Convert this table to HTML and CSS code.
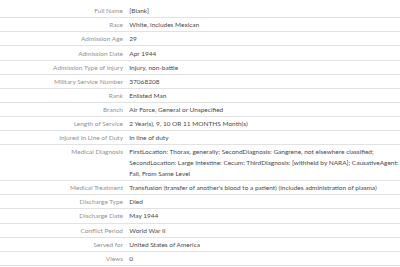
FILE: index.html
```html
<!DOCTYPE html>
<html>
<head>
<meta charset="utf-8">
<link rel="stylesheet" href="styles.css">
</head>
<body>
<div class="details">
  <div class="row"><div class="label">Full Name</div><div class="value">[Blank]</div></div>
  <div class="row"><div class="label">Race</div><div class="value">White, includes Mexican</div></div>
  <div class="row"><div class="label">Admission Age</div><div class="value">29</div></div>
  <div class="row"><div class="label">Admission Date</div><div class="value">Apr 1944</div></div>
  <div class="row"><div class="label">Admission Type of Injury</div><div class="value">Injury, non-battle</div></div>
  <div class="row"><div class="label">Military Service Number</div><div class="value">37068208</div></div>
  <div class="row"><div class="label">Rank</div><div class="value">Enlisted Man</div></div>
  <div class="row"><div class="label">Branch</div><div class="value">Air Force, General or Unspecified</div></div>
  <div class="row"><div class="label">Length of Service</div><div class="value">2 Year(s), 9, 10 OR 11 MONTHS Month(s)</div></div>
  <div class="row"><div class="label">Injured In Line of Duty</div><div class="value">In line of duty</div></div>
  <div class="row"><div class="label">Medical Diagnosis</div><div class="value">FirstLocation: Thorax, generally; SecondDiagnosis: Gangrene, not elsewhere classified; SecondLocation: Large Intestine: Cecum; ThirdDiagnosis: [withheld by NARA]; CausativeAgent: Fall, From Same Level</div></div>
  <div class="row"><div class="label">Medical Treatment</div><div class="value">Transfusion (transfer of another's blood to a patient) (includes administration of plasma)</div></div>
  <div class="row"><div class="label">Discharge Type</div><div class="value">Died</div></div>
  <div class="row"><div class="label">Discharge Date</div><div class="value">May 1944</div></div>
  <div class="row"><div class="label">Conflict Period</div><div class="value">World War II</div></div>
  <div class="row"><div class="label">Served for</div><div class="value">United States of America</div></div>
  <div class="row"><div class="label">Views</div><div class="value">0</div></div>
</div>
</body>
</html>
```
FILE: styles.css
```css
html, body {
  margin: 0;
  padding: 0;
  background: #ffffff;
}
body {
  font-family: Lato, "Open Sans", sans-serif;
  font-size: 6.5px;
  color: #555555;
}
.details {
  padding-top: 4.2px;
}
.row {
  display: grid;
  grid-template-columns: 126px 1fr;
  border-bottom: 1px solid #e2e2e2;
}
.label {
  text-align: right;
  color: #939393;
  padding: 1.05px 3px 1.05px 0;
  line-height: 11px;
}
.value {
  padding: 1.05px 0 1.05px 3.3px;
  line-height: 11px;
  color: #4a4a4a;
}
```
